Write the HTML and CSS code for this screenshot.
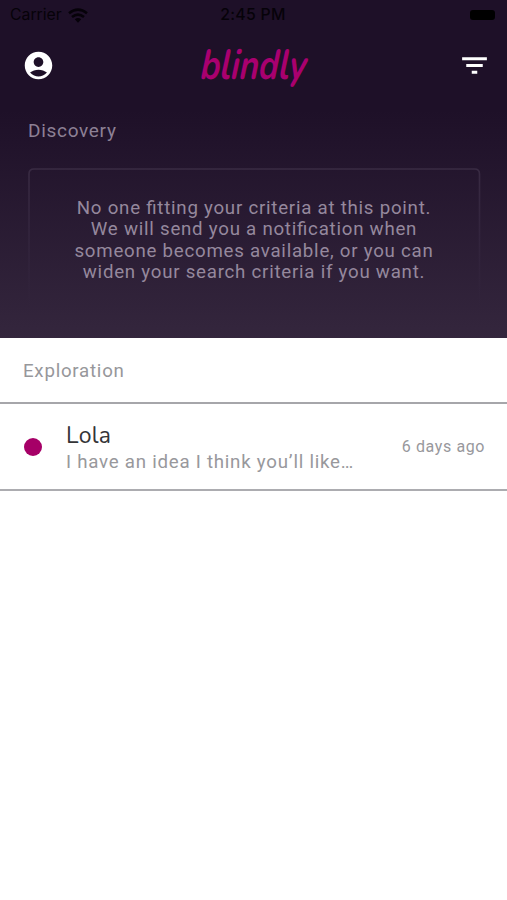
FILE: index.html
```html
<!DOCTYPE html>
<html lang="en">
<head>
<meta charset="utf-8">
<title>blindly</title>
<link rel="stylesheet" href="styles.css">
</head>
<body>
<section class="hero">
  <div class="status">
    <div class="carrier"><span>Carrier</span>
      <svg width="20" height="15" viewBox="0 0 20 15" fill="none" stroke="#060209" stroke-width="2.6"><path d="M1 5.2Q10-2 19 5.2M4 9Q10 4.2 16 9"/><path d="M6.800 11.300Q10 8.800 13.200 11.300L10 14.700Z" fill="#060209" stroke="none"/></svg>
    </div>
    <span class="time">2:45 PM</span>
    <span class="battery"></span>
  </div>
  <header class="bar">
    <svg class="account" width="33" height="33" viewBox="0 0 24 24" fill="#fff"><path d="M12 2C6.480 2 2 6.480 2 12s4.480 10 10 10 10-4.480 10-10S17.520 2 12 2zm0 4c1.930 0 3.500 1.570 3.500 3.500S13.930 13 12 13s-3.500-1.570-3.500-3.500S10.070 6 12 6zm0 14c-2.030 0-4.430-.820-6.140-2.880C7.550 15.800 9.680 15 12 15s4.450.800 6.140 2.120C16.430 19.180 14.030 20 12 20z"/></svg>
    <h1 class="logo">blindly</h1>
    <svg class="filter" width="33" height="33" viewBox="0 0 24 24" fill="#fff"><path d="M10 18h4v-2.200h-4v2.200zM3 6v2.200h18V6H3zm3 7.100h12v-2.200H6v2.200z"/></svg>
  </header>
  <h2 class="discovery">Discovery</h2>
  <div class="card">
    <svg class="outline" width="454" height="148" viewBox="0 0 454 148" fill="none"><defs><linearGradient id="fade" x1="0" y1="0" x2="0" y2="140" gradientUnits="userSpaceOnUse"><stop stop-color="#392b43"/><stop offset="1" stop-color="#3b2c48" stop-opacity="0"/></linearGradient></defs><path d="M2 148V6Q2 1 7 1H447.500Q452.500 1 452.500 6V148" stroke="url(#fade)" stroke-width="1.600"/></svg>
    <p class="message">No one fitting your criteria at this point.<br>We will send you a notification when<br>someone becomes available, or you can<br>widen your search criteria if you want.</p>
  </div>
</section>
<main>
  <h2 class="exploration">Exploration</h2>
  <article class="chat">
    <span class="dot"></span>
    <div class="body">
      <div class="name">Lola</div>
      <div class="preview">I have an idea I think you’ll like…</div>
    </div>
    <time class="ago">6 days ago</time>
  </article>
</main>
</body>
</html>
```

FILE: styles.css
```css
* { box-sizing: border-box; }
body { margin: 0; background: #fff; font-family: Roboto, sans-serif; }
h1, h2, p { margin: 0; font-weight: 400; }
.hero {
  height: 338px;
  overflow: hidden;
  background: linear-gradient(#1e1028 0, #1e1028 110px, #34263d 338px);
}
.status {
  height: 30px;
  padding: 0 11px 0 10px;
  display: grid;
  grid-template-columns: 1fr auto 1fr;
  align-items: center;
  color: #060209;
  font: 15.800px/30px Inter, sans-serif;
}
.carrier { display: flex; align-items: center; gap: 6px; }
.time { font-weight: 500; letter-spacing: .3px; }
.battery { justify-self: end; width: 25px; height: 10px; margin-right: 1px; border-radius: 3px; background: #000; }
.bar {
  height: 72px;
  padding: 0 16px 1px 22px;
  display: grid;
  grid-template-columns: 1fr auto 1fr;
  align-items: center;
}
.filter { justify-self: end; }
.logo {
  width: 102px;
  color: #a9006f;
  font: italic 700 40px/60px Nunito, Lato, cursive;
  display: flex;
  justify-content: center;
  transform: translate(-3px, -1px) scale(.83, 1.05) skewX(-6deg);
}
.discovery {
  padding-left: 28px;
  height: 66px;
  color: #8d8095;
  font-size: 19px;
  line-height: 57px;
  letter-spacing: .7px;
}
.card { height: 148px; padding: 29px 0 0; margin: 0 27px; position: relative; }
.outline { position: absolute; left: 0; top: 0; }
.message {
  color: #95889d;
  font-size: 18.700px;
  line-height: 21.500px;
  letter-spacing: .75px;
  font-feature-settings: "liga" 1;
  text-align: center;
  white-space: nowrap;
  padding: .6px 0 0 1px;
}
.exploration {
  height: 66px;
  padding-left: 23px;
  border-bottom: 2px solid #a6a6aa;
  color: #97979b;
  font-size: 18.700px;
  line-height: 66px;
  letter-spacing: .75px;
}
.chat {
  height: 87px;
  padding: 0 22px 0 24px;
  display: flex;
  align-items: center;
  border-bottom: 2px solid #acacb0;
}
.dot { width: 18px; height: 18px; border-radius: 50%; background: #a60067; }
.body { margin-left: 24px; padding-top: 5px; flex: 1; }
.name { color: #343437; font: 23px/26px "Nunito", Lato, sans-serif; letter-spacing: .3px; }
.preview { color: #98989c; font-size: 18.700px; line-height: 26px; letter-spacing: .75px; white-space: nowrap; }
.ago { color: #98989c; font-size: 16px; letter-spacing: .6px; }
```
